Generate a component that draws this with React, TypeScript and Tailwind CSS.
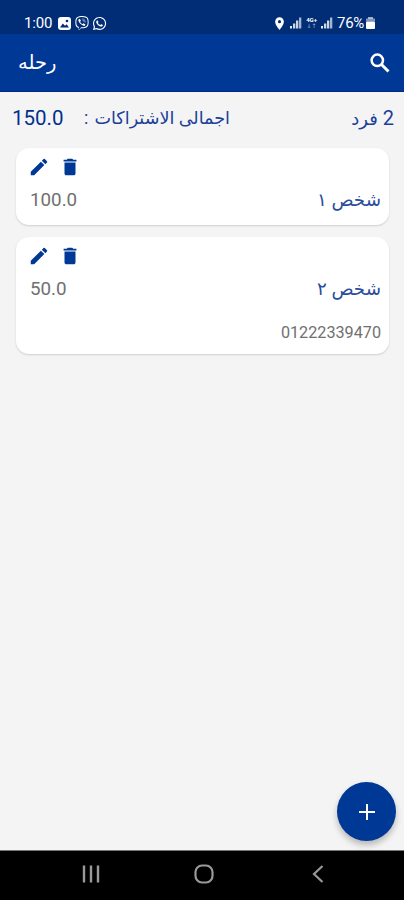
import React from 'react';
import { MdDelete, MdEdit, MdLocationOn } from 'react-icons/md';
import { FaViber, FaWhatsapp } from 'react-icons/fa';

interface Member {
  name: string;
  amount: string;
  phone?: string;
}

const members: Member[] = [
  { name: 'شخص ١', amount: '100.0' },
  { name: 'شخص ٢', amount: '50.0', phone: '01222339470' },
];

const SignalIcon: React.FC = () => (
  <svg viewBox="0 0 12 12" className="w-3 h-3" fill="#fff">
    <rect x="0" y="9" width="2" height="2.5" opacity="0.9" />
    <rect x="3" y="6.5" width="2.3" height="5" opacity="0.8" />
    <rect x="6" y="3.5" width="2.3" height="8" opacity="0.8" />
    <rect x="9" y="0.5" width="2.3" height="11" opacity="0.65" />
  </svg>
);

const StatusBar: React.FC = () => (
  <div className="h-[34px] shrink-0 bg-[#002d75] text-white flex items-start justify-between pl-6 pr-[29px] pt-[15px]">
    <div className="flex items-center h-4">
      <span className="text-[15px] leading-4 w-[34px] tracking-[-0.2px]">1:00</span>
      {/* Gallery notification */}
      <svg viewBox="0 0 13 13" className="w-[13px] h-[13px] mr-[4px]">
        <rect width="13" height="13" rx="3" fill="#fff" />
        <path d="M2 10.5 4.8 6.5 7 8.8 8.6 7.2 11 10.5z" fill="#002d75" />
        <circle cx="9" cy="4" r="1.3" fill="#002d75" />
      </svg>
      <FaViber className="w-[14px] h-[14px] mr-[3px]" />
      <FaWhatsapp className="w-[15px] h-[15px]" />
    </div>
    <div className="flex items-center h-4">
      <MdLocationOn className="w-[15px] h-[15px] mr-[3px]" />
      <SignalIcon />
      <div className="w-[13px] mx-[3px] flex flex-col items-center">
        <span className="text-[6px] leading-[6px] font-bold">4G+</span>
        <span className="text-[6px] leading-[6px] opacity-60">↓↑</span>
      </div>
      <SignalIcon />
      <span className="text-[15px] leading-4 ml-[4px] mr-[1px] tracking-[-0.3px]">76%</span>
      <svg viewBox="0 0 9 12" className="w-[9px] h-3 ml-[1px]" fill="#fff">
        <rect x="2" y="0" width="5" height="2" opacity="0.6" />
        <rect x="0" y="1.5" width="9" height="3" opacity="0.5" />
        <rect x="0" y="4.5" width="9" height="7.5" rx="1" />
      </svg>
    </div>
  </div>
);

const MemberCard: React.FC<{ member: Member }> = ({ member }) => (
  <div className="bg-white rounded-[13px] shadow-[0_1px_2px_rgba(0,0,0,0.16)] pl-[14px] pr-2 pt-2">
    <div className="flex gap-[9px] text-[#003896]">
      <MdEdit className="w-[22px] h-[22px] -ml-[2px]" />
      <MdDelete className="w-[22px] h-[22px]" />
    </div>
    <div className="flex justify-between h-[47px] pt-[10px]">
      <span className="text-[18.8px] leading-6 text-[#707070]">{member.amount}</span>
      <span dir="rtl" className="text-[18.300px] leading-6 text-[#2b4c9c]">{member.name}</span>
    </div>
    {member.phone && (
      <div className="h-10 pt-[9px] text-right text-[16.200px] leading-5 text-[#707070]">{member.phone}</div>
    )}
  </div>
);

export default function App() {
  return (
    <div className="w-[404px] h-[900px] flex flex-col overflow-hidden bg-[#f4f4f4] font-['Roboto','DejaVu_Sans',sans-serif]">
      <StatusBar />

      {/* App bar */}
      <header className="h-[58px] bg-[#003896] border-b border-[#002a85] text-white flex items-center justify-between pl-[18px] pr-[14px] shrink-0">
        <h1 dir="rtl" className="text-[19.5px] leading-6">رحله</h1>
        <svg viewBox="0 0 20 20" className="w-5 h-5" fill="none" stroke="#fff">
          <circle cx="7.300" cy="7.300" r="5.700" strokeWidth="2.500" />
          <path d="M11.500 11.500 18.500 18.500" strokeWidth="3" />
        </svg>
      </header>

      <main className="flex-1 relative">
        {/* Totals */}
        <div className="h-14 pt-[14px] pl-3 pr-[10px] flex items-start text-[#1c3f99]">
          <span className="text-[20.5px] leading-6 w-[72px] text-[#00308f]">150.0</span>
          <span dir="rtl" className="text-[17.600px] leading-6 w-[146px] flex justify-between whitespace-nowrap">
            <span>اجمالى الاشتراكات</span>
            <span>:</span>
          </span>
          <span dir="rtl" className="text-[20px] leading-6 ml-auto whitespace-nowrap">2 <span className="text-[18px]">فرد</span></span>
        </div>

        <div className="flex flex-col gap-3 pl-4 pr-[15px]">
          {members.map((member) => (
            <MemberCard key={member.name} member={member} />
          ))}
        </div>

        {/* Add button */}
        <button className="absolute right-2 bottom-[9px] w-[59px] h-[59px] rounded-full bg-[#003896] flex items-center justify-center shadow-[0_4px_6px_rgba(0,0,0,0.25)]">
          <svg viewBox="0 0 16 16" className="w-4 h-4" stroke="#fff" strokeWidth="2">
            <path d="M8 0v16M0 8h16" />
          </svg>
        </button>
      </main>

      {/* System navigation */}
      <nav className="h-[50px] shrink-0 bg-black border-t border-[#777] flex items-center pl-[82px] pb-[3px]">
        <svg viewBox="0 0 18 18" className="w-[18px] h-[18px] mr-[94px]" stroke="#999" strokeWidth="2.4">
          <path d="M2 0.500v17M9 0.500v17M16 0.500v17" />
        </svg>
        <svg viewBox="0 0 20 20" className="w-5 h-5 mr-[98px]" fill="none" stroke="#999" strokeWidth="2.2">
          <rect x="1.500" y="1.500" width="17" height="17" rx="6.500" />
        </svg>
        <svg viewBox="0 0 12 18" className="w-3 h-[18px]" fill="none" stroke="#999" strokeWidth="2.2">
          <path d="M10.500 1 2 9l8.500 8" />
        </svg>
      </nav>
    </div>
  );
}
